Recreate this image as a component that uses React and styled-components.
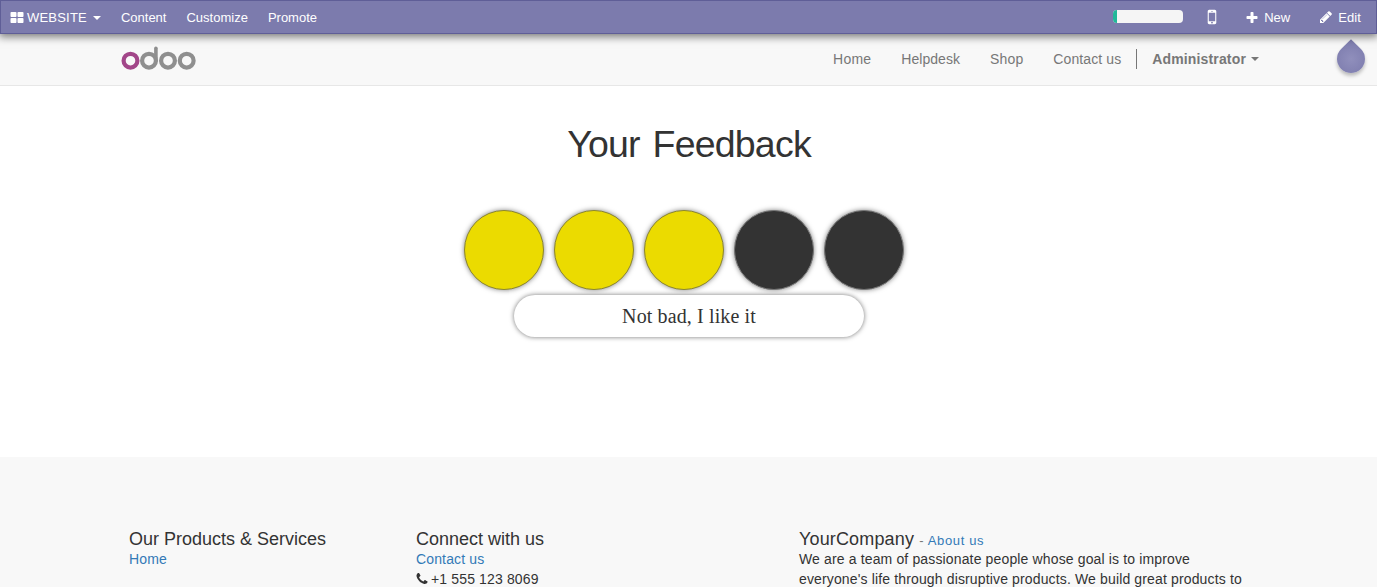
import React from "react";
import styled, { createGlobalStyle } from "styled-components";

const GlobalStyle = createGlobalStyle`
  * { box-sizing: border-box; }
  html, body { margin: 0; height: 100%; overflow: hidden; }
  body {
    background: #fff;
    color: #333;
    font: 14px/20px "Liberation Sans", Arial, sans-serif;
  }
`;

const Page = styled.div`
  display: flex;
  flex-direction: column;
  height: 587px;
  overflow: hidden;
`;

const SystemBar = styled.header`
  position: relative;
  z-index: 2;
  display: flex;
  flex: none;
  justify-content: space-between;
  height: 34px;
  padding: 0 15px 0 10px;
  background: #7c7bad;
  border: 1px solid #5f5e97;
  box-shadow: 0 2px 8px 1px rgba(0, 0, 0, 0.5);
  color: #fff;
  font-size: 13px;
`;

const BarGroup = styled.div`
  display: flex;
  align-items: center;
  padding-top: 2px;
  white-space: nowrap;
`;

const BarItem = styled.span`
  display: flex;
  align-items: center;
  margin-right: ${(p) => p.$after || 0}px;
  letter-spacing: ${(p) => p.$tracking || 0}px;
`;

const Progress = styled.div`
  width: 70px;
  height: 13px;
  margin: 0 22px 3px 0;
  border-radius: 4px;
  background: #f5f5f5;
  overflow: hidden;
`;

const ProgressFill = styled.div`
  width: 4px;
  height: 100%;
  background: #21b799;
`;

const Glyph = styled.svg`
  flex: none;
  width: ${(p) => p.$size}px;
  height: ${(p) => p.$size}px;
  margin: ${(p) => p.$margin || 0};
  fill: currentColor;
`;

const Caret = styled.i`
  margin-left: ${(p) => p.$before}px;
  border-top: 4px solid currentColor;
  border-left: 4px solid transparent;
  border-right: 4px solid transparent;
`;

const Navbar = styled.nav`
  position: relative;
  display: flex;
  flex: none;
  justify-content: space-between;
  height: 52px;
  padding: 0 118px 0 121px;
  background: #f8f8f8;
  border-bottom: 1px solid #e7e7e7;
  color: #777;
`;

const Logo = styled.svg`
  width: 76px;
  height: 26px;
  margin-top: 11px;
  fill: none;
  stroke: #8f8f8f;
  stroke-width: 4.2;
`;

const NavLinks = styled.div`
  display: flex;
  align-items: center;
  height: 20px;
  margin-top: 15px;
  white-space: nowrap;
`;

const NavLink = styled.a`
  margin-right: ${(p) => p.$after}px;
  letter-spacing: ${(p) => p.$tracking || 0}px;
`;

const UserMenu = styled.div`
  display: flex;
  align-items: center;
  height: 20px;
  padding-left: 15px;
  border-left: 1px solid #777;
  font-weight: bold;
  letter-spacing: 0.15px;
`;

const TipDrop = styled.div`
  position: absolute;
  right: 12px;
  top: 11px;
  width: 28px;
  height: 28px;
  border-radius: 0 50% 50% 50%;
  background: radial-gradient(circle, #908fbc, #7c7bad);
  box-shadow: 2px 2px 4px rgba(0, 0, 0, 0.25);
  transform: rotate(45deg);
`;

const Main = styled.main`
  display: flex;
  flex: none;
  flex-direction: column;
  align-items: center;
  height: 371px;
`;

const Title = styled.h1`
  margin: 38px 0 45px;
  padding-left: 1px;
  font-size: 37.5px;
  font-weight: 400;
  line-height: 41px;
  letter-spacing: -0.8px;
  word-spacing: 3.2px;
`;

const Ratings = styled.div`
  display: flex;
  gap: 10px;
  margin-right: 10px;
`;

const Rating = styled.span`
  width: 80px;
  height: 80px;
  border: 1px solid ${(p) => (p.$on ? "#8b8630" : "#777")};
  border-radius: 50%;
  background: ${(p) => (p.$on ? "#ebdb00" : "#333")};
  box-shadow: 0 0 5px rgba(0, 0, 0, 0.5);
`;

const RatingLabel = styled.div`
  width: 350px;
  height: 42px;
  margin-top: 5px;
  border-radius: 21px;
  background: #fff;
  box-shadow: 0 0 5px #777;
  font: 20px/42px "Liberation Serif", "Times New Roman", serif;
  letter-spacing: 0.12px;
  text-align: center;
  text-indent: 1px;
`;

const Footer = styled.footer`
  display: grid;
  grid-template-columns: 287px 383px 460px;
  flex: 1;
  padding: 70px 0 0 129px;
  background: #f8f8f8;
  overflow: hidden;
`;

const FooterTitle = styled.h4`
  margin: 0;
  padding-top: 1px;
  height: 22px;
  font-size: 18px;
  font-weight: 400;
  line-height: 22px;
  letter-spacing: ${(p) => p.$tracking || 0}px;
  white-space: nowrap;
`;

const FooterLink = styled.a`
  color: #337ab7;
`;

const Small = styled.small`
  color: #777;
  font-size: 13px;
  letter-spacing: 0.65px;
`;

const FooterLine = styled.div`
  height: 20px;
  white-space: nowrap;
  letter-spacing: 0.142px;
`;

const ICONS = {
  grid: "M832 1024v384q0 52-38 90t-90 38h-512q-52 0-90-38t-38-90v-384q0-52 38-90t90-38h512q52 0 90 38t38 90zM832 256v384q0 52-38 90t-90 38h-512q-52 0-90-38t-38-90v-384q0-52 38-90t90-38h512q52 0 90 38t38 90zM1728 1024v384q0 52-38 90t-90 38h-512q-52 0-90-38t-38-90v-384q0-52 38-90t90-38h512q52 0 90 38t38 90zM1728 256v384q0 52-38 90t-90 38h-512q-52 0-90-38t-38-90v-384q0-52 38-90t90-38h512q52 0 90 38t38 90z",
  plus: "M1600 736v192q0 40-28 68t-68 28h-416v416q0 40-28 68t-68 28h-192q-40 0-68-28t-28-68v-416h-416q-40 0-68-28t-28-68v-192q0-40 28-68t68-28h416v-416q0-40 28-68t68-28h192q40 0 68 28t28 68v416h416q40 0 68 28t28 68z",
  pencil: "M491 1536l91-91-235-235-91 91v107h128v128h107zm523-928q0-22-22-22-10 0-17 7l-542 542q-7 7-7 17 0 22 22 22 10 0 17-7l542-542q7-7 7-17zm-54-192l416 416-832 832h-416v-416zm683 96q0 53-37 90l-166 166-416-416 166-165q36-38 90-38 53 0 91 38l235 234q37 39 37 91z",
  mobile: "M976 1408q0-33-23.5-56.5t-56.5-23.5-56.5 23.5-23.5 56.5 23.5 56.5 56.5 23.5 56.5-23.5 23.5-56.5zm208-160v-704q0-13-9.5-22.5t-22.5-9.5h-512q-13 0-22.5 9.5t-9.5 22.5v704q0 13 9.5 22.5t22.5 9.5h512q13 0 22.5-9.5t9.5-22.5zm-192-848q0-16-16-16h-160q-16 0-16 16t16 16h160q16 0 16-16zm288-16v1024q0 52-38 90t-90 38h-512q-52 0-90-38t-38-90v-1024q0-52 38-90t90-38h512q52 0 90 38t38 90z",
  phone: "M1600 1240q0 27-10 70.5t-21 68.5q-21 50-122 106-94 51-186 51-27 0-53-3.5t-57-12.5-47-14.5-55.5-20.5-49.5-18q-98-35-175-83-127-79-264-216t-216-264q-48-77-83-175-3-9-18-49.5t-20.5-55.5-14.5-47-12.5-57-3.5-53q0-92 51-186 56-101 106-122 25-11 68.5-21t70.5-10q14 0 21 3 18 6 53 76 11 19 30 54t35 63.5 31 53.5q3 4 17.5 25t21.5 35.5 7 28.5q0 20-28.5 50t-62 55-62 53-28.5 46q0 9 5 22.5t8.5 20.5 14 24 11.5 19q76 137 174 235t235 174q2 1 19 11.5t24 14 20.5 8.5 22.5 5q18 0 46-28.5t53-62 55-62 50-28.5q14 0 28.5 7t35.5 21.5 25 17.5q25 15 53.5 31t63.5 35 54 30q70 35 76 53 3 7 3 21z",
};

function Icon({ name, size, margin }) {
  return (
    <Glyph viewBox="0 0 1792 1792" $size={size} $margin={margin}>
      <path d={ICONS[name]} />
    </Glyph>
  );
}

export default function App() {
  return (
    <Page>
      <GlobalStyle />
      <SystemBar>
        <BarGroup>
          <BarItem $after={20} $tracking={0.2}>
            <Icon name="grid" size={14} margin="0 3px 1px -1px" />
            WEBSITE
            <Caret $before={6} />
          </BarItem>
          <BarItem $after={20}>Content</BarItem>
          <BarItem $after={20}>Customize</BarItem>
          <BarItem>Promote</BarItem>
        </BarGroup>
        <BarGroup>
          <Progress>
            <ProgressFill />
          </Progress>
          <BarItem $after={26}>
            <Icon name="mobile" size={20} margin="0 -3px 2px" />
          </BarItem>
          <BarItem $after={29}>
            <Icon name="plus" size={14} margin="0 5px 1px 0" />
            New
          </BarItem>
          <BarItem $tracking={0.1}>
            <Icon name="pencil" size={14} margin="0 5px 2px 0" />
            Edit
          </BarItem>
        </BarGroup>
      </SystemBar>
      <Navbar>
        <Logo viewBox="0 0 76 26">
          <circle cx="9.5" cy="15.7" r="6.9" stroke="#a24689" />
          <circle cx="28" cy="15.7" r="6.9" />
          <path d="M34.9 15.7V3.2" strokeLinecap="round" strokeWidth="3.6" />
          <circle cx="47" cy="15.7" r="6.9" />
          <circle cx="65.7" cy="15.7" r="6.9" />
        </Logo>
        <NavLinks>
          <NavLink $after={30} $tracking={0.2}>Home</NavLink>
          <NavLink $after={30} $tracking={0.05}>Helpdesk</NavLink>
          <NavLink $after={30} $tracking={0.15}>Shop</NavLink>
          <NavLink $after={15} $tracking={0.1}>Contact us</NavLink>
          <UserMenu>
            Administrator
            <Caret $before={5} />
          </UserMenu>
        </NavLinks>
        <TipDrop />
      </Navbar>
      <Main>
        <Title>Your Feedback</Title>
        <Ratings>
          {[1, 2, 3, 4, 5].map((n) => (
            <Rating key={n} $on={n <= 3} />
          ))}
        </Ratings>
        <RatingLabel>Not bad, I like it</RatingLabel>
      </Main>
      <Footer>
        <div>
          <FooterTitle>Our Products &amp; Services</FooterTitle>
          <FooterLine>
            <FooterLink>Home</FooterLink>
          </FooterLine>
        </div>
        <div>
          <FooterTitle>Connect with us</FooterTitle>
          <FooterLine>
            <FooterLink>Contact us</FooterLink>
          </FooterLine>
          <FooterLine>
            <Icon name="phone" size={14} margin="0 2px -2px -1px" />
            +1 555 123 8069
          </FooterLine>
        </div>
        <div>
          <FooterTitle $tracking={0.15}>
            YourCompany{" "}
            <Small>
              - <FooterLink>About us</FooterLink>
            </Small>
          </FooterTitle>
          <FooterLine>We are a team of passionate people whose goal is to improve</FooterLine>
          <FooterLine>everyone's life through disruptive products. We build great products to</FooterLine>
        </div>
      </Footer>
    </Page>
  );
}
